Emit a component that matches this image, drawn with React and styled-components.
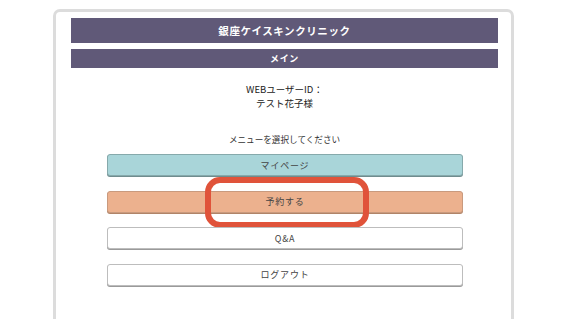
import React from "react";
import styled, { createGlobalStyle } from "styled-components";

const Global = createGlobalStyle`
  html, body { margin: 0; padding: 0; background: #ffffff; }
  body { font-family: "Noto Sans CJK JP", "Noto Sans", sans-serif; overflow: hidden; }
`;

const Page = styled.div`
  width: 570px;
  height: 319px;
  overflow: hidden;
  padding: 9px 0 0 53px;
  box-sizing: border-box;
`;

const Frame = styled.div`
  width: 461px;
  height: 340px;
  box-sizing: border-box;
  border: 3px solid #dcdcdc;
  border-radius: 7px 7px 0 0;
  padding: 6px 13px 0 15px;
  display: flex;
  flex-direction: column;
`;

const Bar = styled.div`
  height: ${(p) => p.$h}px;
  margin-top: ${(p) => p.$mt || 0}px;
  background: #605978;
  color: #ffffff;
  font-weight: 700;
  font-size: ${(p) => p.$fs}px;
  display: flex;
  align-items: center;
  justify-content: center;
  letter-spacing: 0.6px;
`;

const Info = styled.div`
  margin-top: 14px;
  text-align: center;
  font-size: 9.5px;
  line-height: 14px;
  color: #222;
  font-weight: 400;
`;

const Prompt = styled.div`
  margin-top: 22px;
  text-align: center;
  font-size: 8.6px;
  line-height: 14px;
  color: #333;
`;

const Menu = styled.div`
  margin: 8px 0 0 36px;
  width: 356px;
  display: flex;
  flex-direction: column;
  gap: 14.5px;
`;

const palette = {
  teal: { bg: "#a9d5d9", border: "#86a9ab", shadow: "#6f8c8e" },
  orange: { bg: "#ecb18e", border: "#c99a7e", shadow: "#b08468" },
  white: { bg: "#ffffff", border: "#bdbdbd", shadow: "#9a9a9a" },
};

const MenuButton = styled.div`
  position: relative;
  height: 22px;
  box-sizing: border-box;
  background: ${(p) => palette[p.$tone].bg};
  border: 1px solid ${(p) => palette[p.$tone].border};
  border-radius: 3px;
  box-shadow: 0 1px 0 ${(p) => palette[p.$tone].shadow};
  display: flex;
  align-items: center;
  justify-content: center;
  font-size: 9px;
  color: #444;
  letter-spacing: 0.8px;
`;

const Highlight = styled.div`
  position: absolute;
  left: 97px;
  top: -15px;
  width: 164px;
  height: 51px;
  box-sizing: border-box;
  border: 6px solid #e0533a;
  border-radius: 15px;
  pointer-events: none;
`;

export default function App() {
  return (
    <>
      <Global />
      <Page>
        <Frame>
          <Bar $h={25} $fs={10.5}>銀座ケイスキンクリニック</Bar>
          <Bar $h={19} $mt={6} $fs={9}>メイン</Bar>
          <Info>
            WEBユーザーID：
            <br />
            テスト花子様
          </Info>
          <Prompt>メニューを選択してください</Prompt>
          <Menu>
            <MenuButton $tone="teal">マイページ</MenuButton>
            <MenuButton $tone="orange">
              予約する
              <Highlight />
            </MenuButton>
            <MenuButton $tone="white">Q&amp;A</MenuButton>
            <MenuButton $tone="white">ログアウト</MenuButton>
          </Menu>
        </Frame>
      </Page>
    </>
  );
}
